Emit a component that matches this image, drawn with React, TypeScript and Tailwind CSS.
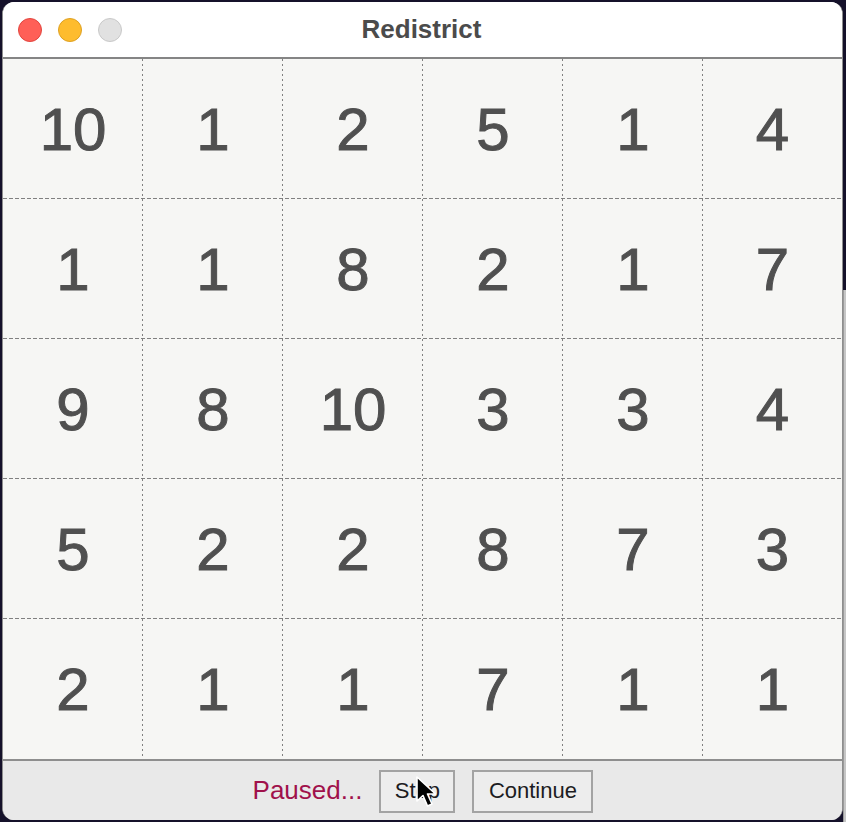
import React from 'react'

const rows: number[][] = [
  [10, 1, 2, 5, 1, 4],
  [1, 1, 8, 2, 1, 7],
  [9, 8, 10, 3, 3, 4],
  [5, 2, 2, 8, 7, 3],
  [2, 1, 1, 7, 1, 1],
]

const font = { fontFamily: '"Liberation Sans", Arial, Helvetica, sans-serif' }

const Cursor: React.FC = () => (
  <svg
    className="absolute left-[34px] top-[4px] pointer-events-none"
    width="26"
    height="34"
    viewBox="0 0 26 34"
  >
    <path
      d="M2 1 L2 25 L8 19.5 L12.5 30 L17 28 L12.5 18 L20.5 18 Z"
      fill="#000"
      stroke="#fff"
      strokeWidth="1.6"
      strokeLinejoin="round"
    />
  </svg>
)

export default function App() {
  return (
    <div className="relative w-[846px] h-[822px] bg-[#15112a] overflow-hidden pt-[2px] pl-[2px]" style={font}>
      {/* window behind, peeking out on the right */}
      <div className="absolute right-0 top-[290px] bottom-0 w-[3px] bg-[#c6c6c6] border-l border-[#9a9a9a]" />

      <div className="w-[841px] h-[818px] rounded-[12px] overflow-hidden flex flex-col bg-white border-x border-[#8e8e8e]">
        {/* Title bar */}
        <div className="h-[57px] shrink-0 grid grid-cols-[1fr_auto_1fr] items-center px-[15px] bg-white border-b-2 border-[#858585]">
          <div className="flex items-center gap-[16px]">
            <span className="w-[24px] h-[24px] rounded-full bg-[#ff5f57] border border-[#e2463f]" />
            <span className="w-[24px] h-[24px] rounded-full bg-[#febc2e] border border-[#dea123]" />
            <span className="w-[24px] h-[24px] rounded-full bg-[#e1e1e1] border border-[#c9c9c9]" />
          </div>
          <div className="text-[26px] font-bold text-[#4b4b4b] leading-none -ml-[2px] -mt-[1px]">Redistrict</div>
          <div />
        </div>

        {/* Grid */}
        <div className="flex flex-col bg-[#f6f6f4] overflow-hidden">
          {rows.map((row, r) => (
            <div
              key={r}
              className={
                r < rows.length - 1
                  ? 'h-[140px] flex bg-[image:repeating-linear-gradient(to_right,#808080_0_4px,transparent_4px_6px)] bg-no-repeat bg-bottom bg-[length:100%_1px]'
                  : 'h-[140px] flex'
              }
            >
              {row.map((n, c) => (
                <div
                  key={c}
                  className={
                    c < row.length - 1
                      ? 'w-[140px] shrink-0 flex items-center justify-center text-[60px] leading-none text-[#505050] [-webkit-text-stroke:1px_#505050] pt-[2px] bg-[image:repeating-linear-gradient(to_bottom,#808080_0_2px,transparent_2px_5px)] bg-no-repeat bg-right bg-[length:1px_100%]'
                      : 'flex-1 flex items-center justify-center text-[60px] leading-none text-[#505050] [-webkit-text-stroke:1px_#505050] pt-[2px]'
                  }
                >
                  {n}
                </div>
              ))}
            </div>
          ))}
        </div>

        {/* Bottom bar */}
        <div className="flex-1 flex items-center justify-center gap-[17px] bg-[#e9e9e9] border-t-2 border-[#8e8e8e] pt-[1px] pl-[1px]">
          <span className="text-[26px] leading-none text-[#a0114b] -mt-[2px]">Paused...</span>
          <button className="relative w-[76px] h-[43px] border-2 border-[#a3a3a3] bg-[#ededed] text-[22px] leading-none text-[#1c1c22]">
            Stop
            <Cursor />
          </button>
          <button className="w-[121px] h-[43px] border-2 border-[#a3a3a3] bg-[#ededed] text-[22px] leading-none text-[#1c1c22]">
            Continue
          </button>
        </div>
      </div>
    </div>
  )
}
